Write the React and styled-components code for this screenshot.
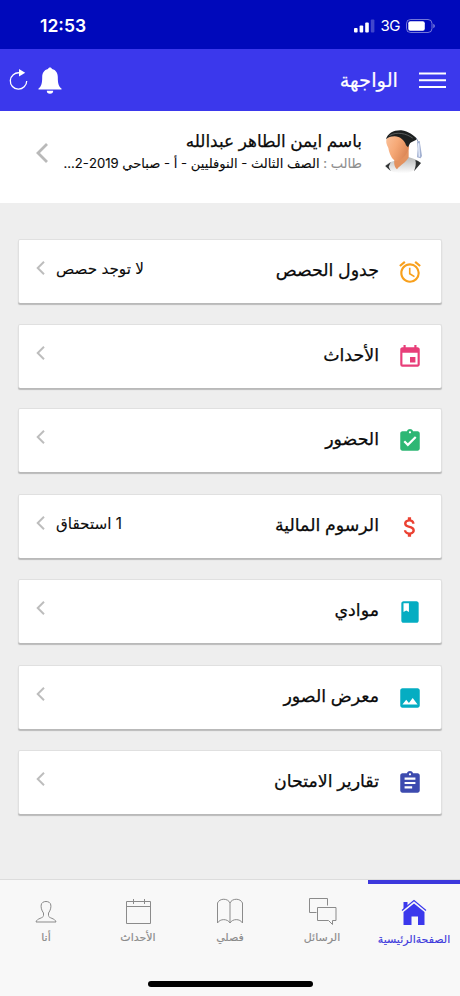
import React from 'react';
import styled, { createGlobalStyle } from 'styled-components';
import {
    MdAlarm,
    MdEvent,
    MdAssignmentTurnedIn,
    MdAttachMoney,
    MdClass,
    MdImage,
    MdAssignment,
} from 'react-icons/md';

const GlobalStyle = createGlobalStyle`
    * {
        box-sizing: border-box;
    }
    body {
        margin: 0;
        background-color: #eeeeee;
        font-family: Inter, "DejaVu Sans", sans-serif;
        color: #0a0a0a;
    }
`;

const Screen = styled.div`
    display: flex;
    flex-direction: column;
    width: 460px;
    height: 996px;
    overflow: hidden;
    background-color: #eeeeee;
`;

const StatusBar = styled.div`
    display: flex;
    justify-content: space-between;
    align-items: center;
    height: 49px;
    padding: 2px 25px 0 40px;
    background-color: #0009bb;
    color: white;
`;

const Time = styled.span`
    font-size: 17.5px;
    font-weight: 600;
`;

const Signals = styled.div`
    display: flex;
    align-items: center;
`;

const Network = styled.span`
    margin: 0 6px;
    font-size: 15px;
    line-height: 18px;
    letter-spacing: -0.5px;
`;

const NavBar = styled.header`
    display: flex;
    align-items: center;
    height: 62px;
    padding: 0 14px 0 9px;
    background-color: #3b38ec;
    color: white;
`;

const BellIcon = styled.svg`
    margin-left: 10px;
`;

const Title = styled.h1`
    margin: 0 21px 1px auto;
    font-size: 19.5px;
    font-weight: 500;
    line-height: 30px;
    -webkit-text-stroke: 0.2px currentColor;
`;

const Profile = styled.section`
    display: flex;
    align-items: center;
    justify-content: space-between;
    height: 92px;
    padding: 0 32px 9px 36px;
    background-color: white;
`;

const ProfileText = styled.div`
    width: 300px;
    margin-left: auto;
    margin-right: 16px;
    padding-bottom: 3px;
`;

const Name = styled.div`
    font-size: 16.9px;
    font-weight: 500;
    line-height: 24px;
    -webkit-text-stroke: 0.25px currentColor;
`;

const Details = styled.div`
    font-size: 13.1px;
    line-height: 20px;
    white-space: nowrap;
    -webkit-text-stroke: 0.1px currentColor;
`;

const Role = styled.span`
    color: #8e8e8e;
`;

const List = styled.main`
    display: grid;
    grid-template-rows: 85px 84px 86px 85px 86px 85px 64px;
    padding: 36px 18px 0;
    flex: 1;
`;

const Card = styled.div`
    display: flex;
    align-items: center;
    height: 64px;
    padding: 0 18px 0 17px;
    border: 1px solid #e0e0e0;
    border-bottom: 0;
    border-radius: 2px;
    background-color: white;
    box-shadow: 0 2px 1px rgba(0, 0, 0, 0.22);

    > svg {
        flex-shrink: 0;
        margin-bottom: 8px;
    }
`;

const CardIcon = styled.div`
    display: flex;
    margin-left: 18px;
    color: ${({ $color }) => $color};
`;

const CardTitle = styled.div`
    margin-left: auto;
    padding-bottom: 3px;
    font-size: 17.4px;
    font-weight: 500;
    line-height: 30px;
    -webkit-text-stroke: 0.25px currentColor;
`;

const CardNote = styled.div`
    margin-left: 11px;
    padding-bottom: 5px;
    font-size: 15.2px;
    line-height: 26px;
    -webkit-text-stroke: 0.1px currentColor;
`;

const TabBar = styled.nav`
    display: grid;
    grid-template-columns: repeat(5, 92px);
    height: 83px;
    border-top: 1px solid #dcdcdc;
    background-color: #f8f8f8;
`;

const Tab = styled.div`
    display: flex;
    flex-direction: column;
    align-items: center;
    padding-top: ${({ $active }) => ($active ? '14px' : '15px')};
    border-top: ${({ $active }) => ($active ? '4px solid #3d38dc' : '0')};
    color: ${({ $active }) => ($active ? '#3d38dc' : '#8b8b8b')};
`;

const TabLabel = styled.span`
    margin-top: 2px;
    font-size: 11px;
    line-height: 20px;
    white-space: nowrap;
    -webkit-text-stroke: 0.15px currentColor;
`;

const HomeArea = styled.div`
    display: flex;
    justify-content: center;
    height: 34px;
    padding-top: 19px;
    background-color: #f8f8f8;
`;

const HomeIndicator = styled.div`
    width: 165px;
    height: 6px;
    border-radius: 3px;
    background-color: black;
`;

const AvatarPicture = styled.svg`
    margin-bottom: 5px;
`;

const Chevron = ({ width, height, color }) => (
    <svg width={width} height={height} viewBox="0 0 12 20" fill="none" stroke={color} strokeWidth="2.8">
        <path d="M11 1 2 10l9 9" />
    </svg>
);

const SignalBars = () => (
    <svg width="21" height="14" viewBox="0 0 21 14" fill="white">
        <rect x="0" y="9" width="3.6" height="4.5" rx="1" />
        <rect x="5.6" y="6.5" width="3.6" height="7" rx="1" />
        <rect x="11.2" y="3.5" width="3.6" height="10" rx="1" />
        <rect x="16.8" y="0.5" width="3.6" height="13" rx="1" opacity="0.25" />
    </svg>
);

const Battery = () => (
    <svg width="29" height="14" viewBox="0 0 29 14" fill="none">
        <rect x="0.5" y="0.5" width="25.5" height="13" rx="4" stroke="white" strokeOpacity="0.45" />
        <rect x="2.3" y="2.3" width="16.5" height="9.4" rx="2" fill="white" />
        <path d="M27.3 4.8c2 .9 2 3.5 0 4.4z" fill="white" fillOpacity="0.5" />
    </svg>
);

const Refresh = () => (
    <svg width="19" height="22" viewBox="0 0 19 22" fill="none">
        <path d="M10.4 3.8a8.2 8.2 0 1 0 7.3 8.1" stroke="white" strokeWidth="1.3" />
        <path d="M10 0v7.5l6.2-3.7z" fill="white" />
    </svg>
);

const Bell = () => (
    <BellIcon width="24" height="27" viewBox="0 0 24 27" fill="white">
        <path d="M12 .5c1.1 0 1.8.7 2 1.6 4 1 5.8 4.1 5.8 8 0 6.2.7 9.3 3.7 11.5v.8H.5v-.8c3-2.2 3.7-5.3 3.7-11.5 0-3.9 1.8-7 5.8-8 .2-.9.9-1.6 2-1.6z" />
        <path d="M8.8 23.7h6.4a3.2 3 0 0 1-6.4 0z" />
    </BellIcon>
);

const Menu = () => (
    <svg width="27" height="17" viewBox="0 0 27 17" fill="white">
        <path d="M0 .5h27v2H0zM0 7.3h27v2H0zM0 14.1h27v2H0z" />
    </svg>
);

const Avatar = () => (
    <AvatarPicture width="50" height="56" viewBox="0 0 150 168">
        <defs>
            <linearGradient id="skin" x1="0" y1="0" x2="1" y2="0.5">
                <stop offset="0" stopColor="#fac19a" />
                <stop offset="0.5" stopColor="#f6a977" />
                <stop offset="1" stopColor="#dc8756" />
            </linearGradient>
            <linearGradient id="shirt" x1="0" y1="0" x2="0" y2="1">
                <stop offset="0" stopColor="#b4b6b6" />
                <stop offset="1" stopColor="#ffffff" />
            </linearGradient>
        </defs>
        <path d="M20 133C30 120 45 118 58 114L88 104C105 108 120 114 128 122C118 142 98 154 74 154C52 154 34 148 20 133z" fill="url(#shirt)" />
        <path d="M22 132L38 121L32 134L38 147z" fill="#2e3132" />
        <path d="M112 114C118 116 125 120 129 123L108 148C113 136 115 124 112 114z" fill="#2e3132" />
        <path d="M52 104L92 66L92 106C84 122 68 128 57 142C48 132 46 122 52 104z" fill="#e3925f" />
        <path d="M26 50C40 36 78 36 90 58C96 70 92 86 83 98C74 109 64 119 52 116C42 112 34 96 31 78C25 66 23 58 26 50z" fill="url(#skin)" />
        <path d="M24 52C28 34 48 24 70 25C92 28 106 40 117 50C112 58 100 58 96 64L90 76L84 70C80 54 66 44 50 43C38 43 30 47 24 52z" fill="#1d2020" />
        <path d="M34 41C56 28 84 34 104 48" fill="none" stroke="#666a6a" strokeWidth="2.5" />
        <path d="M115 49L120 58" fill="none" stroke="#8a94ad" strokeWidth="3" />
        <path d="M117 58L125 57L132 102L128 109L117 106L119 80z" fill="#a3b1d1" />
        <path d="M122 64L124 104" fill="none" stroke="#eaf1ff" strokeWidth="4" />
    </AvatarPicture>
);

const PersonTabIcon = () => (
    <svg width="22" height="30" viewBox="0 0 22 30" fill="none" stroke="currentColor">
        <path d="M8.5 18C6.5 15.5 5.8 12 6.2 10C6.6 5.3 15.4 5.3 15.8 10c.4 2-.3 5.500-2.300 8V20.500c0 3 6.700 2.500 7.500 6.500H1c.8-4 7.500-3.500 7.500-6.500z" />
    </svg>
);

const CalendarTabIcon = () => (
    <svg width="27" height="30" viewBox="0 0 27 30" fill="none" stroke="currentColor">
        <path d="M1.500 6.500h24v22h-24zM1.500 11.500h24M8.500 4v5M19.500 4v5" />
    </svg>
);

const BookTabIcon = () => (
    <svg width="28" height="30" viewBox="0 0 28 30" fill="none" stroke="currentColor">
        <path d="M14 8C12 3 3.5 3 1.500 8v20c2.500-4.500 10-4.500 12.500 0V8c2-5 10.500-5 12.500 0v20c-2.500-4.500-10-4.500-12.500 0" />
    </svg>
);

const ChatTabIcon = () => (
    <svg width="29" height="30" viewBox="0 0 29 30" fill="none" stroke="currentColor">
        <path d="M8.500 17.500H1.500V3.500h18v7M9.500 12.500H28v13h-3.500v4l-4-4h-11z" />
    </svg>
);

const HomeTabIcon = () => (
    <svg width="26" height="29" viewBox="0 0 26 29" fill="#3b38ec">
        <path d="M2.5 4h4v4l-4 3.5z" />
        <path d="M13 5.500l10.5 8.500V27H17v-8.500h-6.500V27h-8V14z" />
        <path d="M1 12.500L13 2.500l12 10" fill="none" stroke="#3b38ec" strokeWidth="1.2" />
    </svg>
);

const cards = [
    { title: 'جدول الحصص', note: 'لا توجد حصص', icon: MdAlarm, color: '#f8a01c' },
    { title: 'الأحداث', icon: MdEvent, color: '#e83e79' },
    { title: 'الحضور', icon: MdAssignmentTurnedIn, color: '#2eb774' },
    { title: 'الرسوم المالية', note: '1 استحقاق', icon: MdAttachMoney, color: '#eb4132' },
    { title: 'موادي', icon: MdClass, color: '#05adc2' },
    { title: 'معرض الصور', icon: MdImage, color: '#05adc2' },
    { title: 'تقارير الامتحان', icon: MdAssignment, color: '#3d4baf' },
];

const tabs = [
    { label: 'أنا', icon: PersonTabIcon },
    { label: 'الأحداث', icon: CalendarTabIcon },
    { label: 'فصلي', icon: BookTabIcon },
    { label: 'الرسائل', icon: ChatTabIcon },
    { label: 'الصفحةالرئيسية', icon: HomeTabIcon, active: true },
];

const App = () => (
    <>
        <GlobalStyle />
        <Screen>
            <StatusBar>
                <Time>12:53</Time>
                <Signals>
                    <SignalBars />
                    <Network>3G</Network>
                    <Battery />
                </Signals>
            </StatusBar>
            <NavBar>
                <Refresh />
                <Bell />
                <Title dir="rtl">الواجهة</Title>
                <Menu />
            </NavBar>
            <Profile>
                <Chevron width={12} height={20} color="#b9b9b9" />
                <ProfileText dir="rtl">
                    <Name>باسم ايمن الطاهر عبدالله</Name>
                    <Details>
                        <Role>طالب : </Role>
                        الصف الثالث - النوفليين - أ - صباحي 2019-2...
                    </Details>
                </ProfileText>
                <Avatar />
            </Profile>
            <List>
                {cards.map(({ title, note, icon: Icon, color }) => (
                    <Card key={title}>
                        <Chevron width={9} height={14} color="#bdbdbd" />
                        {note && <CardNote dir="rtl">{note}</CardNote>}
                        <CardTitle dir="rtl">{title}</CardTitle>
                        <CardIcon $color={color}>
                            <Icon size={26} />
                        </CardIcon>
                    </Card>
                ))}
            </List>
            <TabBar>
                {tabs.map(({ label, icon: Icon, active }) => (
                    <Tab key={label} $active={active}>
                        <Icon />
                        <TabLabel dir="rtl">{label}</TabLabel>
                    </Tab>
                ))}
            </TabBar>
            <HomeArea>
                <HomeIndicator />
            </HomeArea>
        </Screen>
    </>
);

export default App;
